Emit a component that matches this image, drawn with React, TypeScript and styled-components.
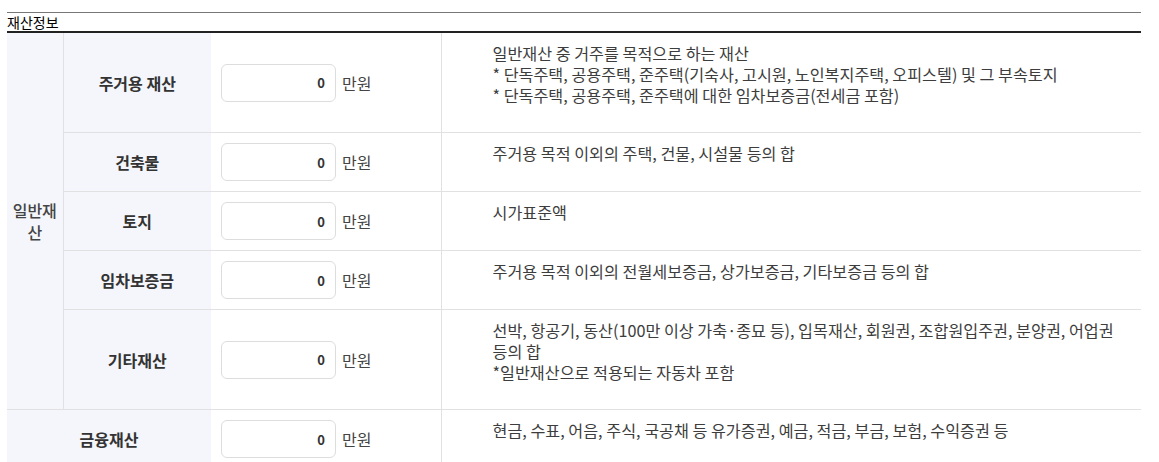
import React from "react";
import styled, { createGlobalStyle } from "styled-components";

const GlobalStyle = createGlobalStyle`
  html, body {
    margin: 0;
    padding: 0;
    background: #ffffff;
  }
  body {
    font-family: "Noto Sans CJK KR", "Noto Sans", sans-serif;
    color: #333333;
  }
  * { box-sizing: border-box; }
`;

const Page = styled.div`
  padding: 12px 18px 0 7px;
`;

const Section = styled.section`
  border-top: 1px solid #777777;
`;

const Title = styled.h2`
  margin: 0;
  font-size: 14px;
  line-height: 18px;
  font-weight: 400;
  color: #000000;
  border-bottom: 2px solid #222222;
`;

const Table = styled.table`
  width: 100%;
  table-layout: fixed;
  border-collapse: collapse;
`;

const GroupCell = styled.th`
  background: #f4f6fb;
  border-right: 1px solid #e1e1e1;
  border-bottom: 1px solid #e1e1e1;
  padding: 0 4px;
  font-size: 16px;
  line-height: 22px;
  font-weight: 500;
  color: #444444;
  text-align: center;
  vertical-align: middle;
`;

const LabelCell = styled.th`
  background: #f4f6fb;
  border-bottom: 1px solid #e1e1e1;
  padding: 0 8px;
  font-size: 16px;
  font-weight: 700;
  color: #333333;
  text-align: center;
  vertical-align: middle;
`;

const InputCell = styled.td`
  border-bottom: 1px solid #e1e1e1;
  padding: 10px 10px;
  vertical-align: middle;
`;

const InputRow = styled.div`
  display: flex;
  align-items: center;
  gap: 6px;
`;

const AmountInput = styled.input`
  width: 115px;
  height: 38px;
  border: 1px solid #dddddd;
  border-radius: 6px;
  padding: 0 10px;
  text-align: right;
  font-family: "Noto Sans CJK KR", "Noto Sans", sans-serif;
  font-size: 13px;
  font-weight: 700;
  color: #333333;
  background: #ffffff;
  outline: none;
`;

const Unit = styled.span`
  font-size: 16px;
  color: #444444;
`;

const DescCell = styled.td`
  border-left: 1px solid #e1e1e1;
  border-bottom: 1px solid #e1e1e1;
  padding: 10px 10px 26px 51px;
  vertical-align: top;
  font-size: 16.2px;
  color: #3d3d3d;
`;

const Line = styled.div`
  height: 21px;
  line-height: 21px;
  white-space: nowrap;
`;

type Item = { label: string; lines: string[] };

const general: Item[] = [
  {
    label: "주거용 재산",
    lines: [
      "일반재산 중 거주를 목적으로 하는 재산",
      "* 단독주택, 공용주택, 준주택(기숙사, 고시원, 노인복지주택, 오피스텔) 및 그 부속토지",
      "* 단독주택, 공용주택, 준주택에 대한 임차보증금(전세금 포함)",
    ],
  },
  { label: "건축물", lines: ["주거용 목적 이외의 주택, 건물, 시설물 등의 합"] },
  { label: "토지", lines: ["시가표준액"] },
  { label: "임차보증금", lines: ["주거용 목적 이외의 전월세보증금, 상가보증금, 기타보증금 등의 합"] },
  {
    label: "기타재산",
    lines: [
      "선박, 항공기, 동산(100만 이상 가축·종묘 등), 입목재산, 회원권, 조합원입주권, 분양권, 어업권",
      "등의 합",
      "*일반재산으로 적용되는 자동차 포함",
    ],
  },
];

const Amount: React.FC = () => (
  <InputCell>
    <InputRow>
      <AmountInput type="text" defaultValue="0" readOnly />
      <Unit>만원</Unit>
    </InputRow>
  </InputCell>
);

const Desc: React.FC<{ lines: string[] }> = ({ lines }) => (
  <DescCell>
    {lines.map((l) => (
      <Line key={l}>{l}</Line>
    ))}
  </DescCell>
);

export default function App() {
  return (
    <>
      <GlobalStyle />
      <Page>
        <Section>
          <Title>재산정보</Title>
          <Table>
            <colgroup>
              <col style={{ width: 56 }} />
              <col style={{ width: 148 }} />
              <col style={{ width: 230 }} />
              <col />
            </colgroup>
            <tbody>
              {general.map((item, i) => (
                <tr key={item.label}>
                  {i === 0 && <GroupCell rowSpan={general.length}>일반재산</GroupCell>}
                  <LabelCell>{item.label}</LabelCell>
                  <Amount />
                  <Desc lines={item.lines} />
                </tr>
              ))}
              <tr>
                <LabelCell colSpan={2}>금융재산</LabelCell>
                <Amount />
                <Desc lines={["현금, 수표, 어음, 주식, 국공채 등 유가증권, 예금, 적금, 부금, 보험, 수익증권 등"]} />
              </tr>
            </tbody>
          </Table>
        </Section>
      </Page>
    </>
  );
}
